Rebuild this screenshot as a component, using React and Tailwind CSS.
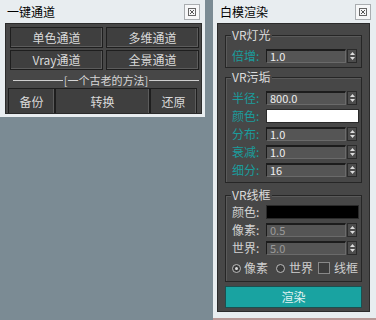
import React from 'react';

function CloseBtn() {
  return (
    <div className="w-[16px] h-[16px] border border-[#a9adb0] bg-[#f6f7f8] flex items-center justify-center">
      <svg width="8" height="8" viewBox="0 0 8 8">
        <rect x="0.5" y="0.5" width="7" height="7" fill="none" stroke="#666" strokeWidth="1" />
        <path d="M2 2 L6 6 M6 2 L2 6" stroke="#555" strokeWidth="1" />
      </svg>
    </div>
  );
}

function Spinner() {
  return (
    <div className="w-[10px] h-[14px] bg-[#4c4c4c] border border-[#2a2a2a] flex flex-col items-center justify-center gap-[2px]">
      <svg width="5" height="3" viewBox="0 0 5 3"><path d="M0 3 L2.5 0 L5 3 Z" fill="#ddd" /></svg>
      <svg width="5" height="3" viewBox="0 0 5 3"><path d="M0 0 L2.5 3 L5 0 Z" fill="#ddd" /></svg>
    </div>
  );
}

function NumRow({ label, value, teal = true, dim = false }) {
  return (
    <div className="flex items-center h-[14px]">
      <span className={`w-[34px] text-[12px] leading-none ${teal ? 'text-[#1a9c9c]' : 'text-[#d2d2d2]'}`}>{label}</span>
      <div className={`w-[80px] h-[14px] bg-[#555] border-t-2 border-l border-[#1c1c1c] border-b border-r border-b-[#6a6a6a] border-r-[#6a6a6a] flex items-center px-[3px] text-[11px] leading-none ${dim ? 'text-[#9a9a9a]' : 'text-[#eee]'}`}>
        {value}
      </div>
      <div className="ml-[1px]">
        <Spinner />
      </div>
    </div>
  );
}

function ColorRow({ label, color, teal = true }) {
  return (
    <div className="flex items-center h-[14px]">
      <span className={`w-[34px] text-[12px] leading-none ${teal ? 'text-[#1a9c9c]' : 'text-[#d2d2d2]'}`}>{label}</span>
      <div className={`w-[93px] h-[14px] border border-[#2a2a2a] ${color}`} />
    </div>
  );
}

function Group({ title, className, children }) {
  return (
    <div className={`relative mx-[7px] border border-[#262626] shadow-[inset_1px_1px_0_#5a5a5a] ${className}`}>
      <span className="absolute -top-[9px] left-[5px] bg-[#474747] px-[1px] text-[12px] leading-[16px] text-[#dcdcdc]">{title}</span>
      {children}
    </div>
  );
}

function LeftBtn({ children, className = '' }) {
  return (
    <div className={`h-full bg-[#3f3f3f] border border-[#1e1e1e] shadow-[inset_-1px_-1px_0_#5c5c5c] flex items-center justify-center text-[12px] text-[#dadada] ${className}`}>
      {children}
    </div>
  );
}

export default function App() {
  return (
    <div className="w-[376px] h-[320px] bg-[#7b8b94] flex items-start font-['Noto_Sans_CJK_SC',sans-serif] overflow-hidden">
      {/* 一键通道 */}
      <div className="w-[205px] h-[117px] bg-[#e8edf0] flex flex-col">
        <div className="h-[23px] flex items-center justify-between pl-[7px] pr-[5px]">
          <span className="text-[12px] text-black">一键通道</span>
          <CloseBtn />
        </div>
        <div className="ml-[5px] w-[197px] h-[91px] bg-[#474747] border border-[#2b2b2b] overflow-hidden pt-[3px] pl-[4px] pr-[2px]">
          <div className="grid grid-cols-2 gap-x-[3px] gap-y-[2px] grid-rows-[21px_20px]">
            <LeftBtn>单色通道</LeftBtn>
            <LeftBtn>多维通道</LeftBtn>
            <LeftBtn>Vray通道</LeftBtn>
            <LeftBtn>全景通道</LeftBtn>
          </div>
          <div className="h-[16px] mt-[2px] flex items-center gap-[1px] pl-[3px]">
            <div className="flex-1 h-px bg-[#cfcfcf]" />
            <span className="text-[11px] text-[#d6d6d6] leading-none">[一个古老的方法]</span>
            <div className="flex-1 h-px bg-[#cfcfcf]" />
          </div>
          <div className="flex h-[27px] -ml-[2px]">
            <LeftBtn className="w-[47px]">备份</LeftBtn>
            <LeftBtn className="w-[95px]">转换</LeftBtn>
            <LeftBtn className="w-[47px]">还原</LeftBtn>
          </div>
        </div>
      </div>

      <div className="w-[8px]" />

      {/* 白模渲染 */}
      <div className="flex-1 h-[320px] bg-[#e8edf0] flex flex-col border-b-2 border-[#b89a98]">
        <div className="h-[23px] flex items-center justify-between pl-[7px] pr-[5px]">
          <span className="text-[12px] text-black">白模渲染</span>
          <CloseBtn />
        </div>
        <div className="ml-[4px] w-[153px] h-[289px] bg-[#474747] border border-[#2b2b2b] pt-[11px] flex flex-col">
          <Group title="VR灯光" className="h-[33px] pt-[13px] pl-[6px]">
            <NumRow label="倍增:" value="1.0" />
          </Group>
          <Group title="VR污垢" className="h-[106px] mt-[9px] pt-[13px] pl-[6px] flex flex-col gap-[4px]">
            <NumRow label="半径:" value="800.0" />
            <ColorRow label="颜色:" color="bg-white" />
            <NumRow label="分布:" value="1.0" />
            <NumRow label="衰减:" value="1.0" />
            <NumRow label="细分:" value="16" />
          </Group>
          <Group title="VR线框" className="h-[87px] mt-[12px] pt-[9px] pl-[6px] flex flex-col gap-[4px]">
            <ColorRow label="颜色:" color="bg-black" teal={false} />
            <NumRow label="像素:" value="0.5" teal={false} dim />
            <NumRow label="世界:" value="5.0" teal={false} dim />
            <div className="flex items-center h-[14px] mt-[2px] text-[12px] text-[#cfcfcf] leading-none">
              <span className="w-[9px] h-[9px] rounded-full border border-[#bbb] bg-[#3a3a3a] flex items-center justify-center">
                <span className="w-[3px] h-[3px] rounded-full bg-[#ddd]" />
              </span>
              <span className="ml-[3px]">像素</span>
              <span className="ml-[8px] w-[9px] h-[9px] rounded-full border border-[#bbb] bg-[#3a3a3a]" />
              <span className="ml-[4px]">世界</span>
              <span className="ml-[5px] w-[12px] h-[12px] border border-[#888] bg-[#3c3c3c]" />
              <span className="ml-[4px]">线框</span>
            </div>
          </Group>
          <div className="mx-[7px] mt-[4px] h-[22px] bg-[#19a3a1] border border-[#1d4f4f] flex items-center justify-center text-[12px] text-[#e4f4f4]">
            渲染
          </div>
        </div>
      </div>
    </div>
  );
}
